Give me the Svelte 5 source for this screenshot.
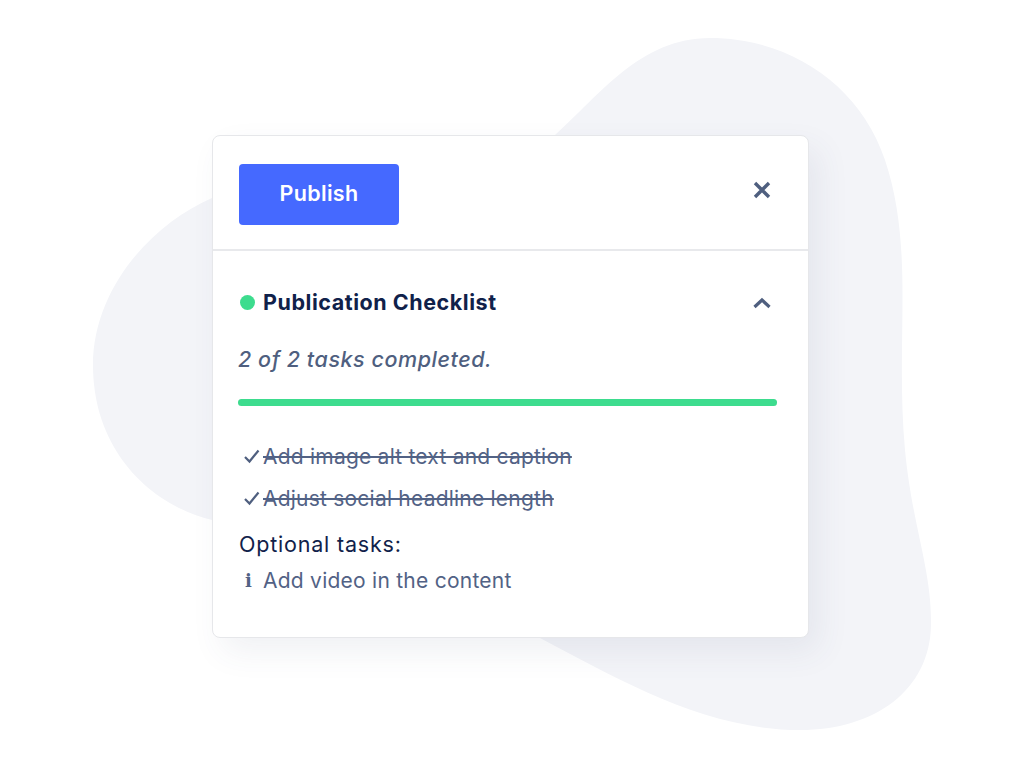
<script>
	let done = ["Add image alt text and caption", "Adjust social headline length"];
</script>

<div class="stage">
	<svg class="blob" width="1024" height="768" viewBox="0 0 1024 768">
		<path d="M555 135C600 95 640 38 710 38C790 38 860 85 885 160C915 250 895 340 905 450C912 525 932 570 931 625C930 690 875 730 800 730C705 730 620 680 540 638L212 520C150 505 93 450 93 365C93 290 150 225 212 198Z" fill="#f3f4f8" />
	</svg>

	<div class="card">
		<div class="top">
			<button class="publish">Publish</button>
			<svg class="icon close" width="20" height="20" viewBox="0 0 20 20">
				<path d="M3 3L17 17M17 3L3 17" stroke="#4f5f7f" stroke-width="3.4" fill="none" />
			</svg>
		</div>

		<div class="body">
			<div class="heading">
				<span class="dot"></span>
				<h2>Publication Checklist</h2>
				<svg class="icon chevron" width="20" height="12" viewBox="0 0 20 12">
					<path d="M2.5 10L10 3L17.5 10" stroke="#4f5f7f" stroke-width="3.2" fill="none" />
				</svg>
			</div>

			<p class="status">2 of 2 tasks completed.</p>
			<div class="track"><div class="fill" style="width: 100%"></div></div>

			<ul class="tasks">
				{#each done as task}
					<li>
						<svg width="18" height="18" viewBox="0 0 18 18">
							<path d="M2 10L6.5 14.5L15.5 3.5" stroke="#4f5f7f" stroke-width="2.2" fill="none" />
						</svg>
						<s>{task}</s>
					</li>
				{/each}
			</ul>

			<div class="optional">Optional tasks:</div>
			<div class="opt-task"><span class="info">i</span>Add video in the content</div>
		</div>
	</div>
</div>

<style>
	:global(body) {
		background: #fff;
	}
	.stage {
		position: relative;
		width: 1024px;
		height: 768px;
		padding: 135px 0 0 212px;
		box-sizing: border-box;
		overflow: hidden;
		font-family: "Inter", "Liberation Sans", sans-serif;
	}
	.blob {
		position: absolute;
		left: 0;
		top: 0;
	}
	.card {
		position: relative;
		width: 597px;
		height: 503px;
		box-sizing: border-box;
		background: #fff;
		border: 1px solid #e6e7ea;
		border-radius: 8px;
		box-shadow: 10px 14px 32px rgba(60, 75, 110, 0.08);
	}
	.top {
		display: flex;
		align-items: center;
		justify-content: space-between;
		height: 115px;
		box-sizing: border-box;
		padding: 4px 36px 0 26px;
		border-bottom: 2px solid #e8e9ec;
	}
	.publish {
		width: 160px;
		height: 61px;
		padding: 0 0 4px;
		background: #4569ff;
		color: #fff;
		border: none;
		border-radius: 4px;
		font: 600 21.5px "Inter", sans-serif;
		letter-spacing: 0.3px;
	}
	.close {
		margin-bottom: 10px;
	}
	.icon {
		display: block;
	}
	.chevron {
		margin-top: 2px;
	}
	.body {
		padding: 36px 31px 0 25px;
	}
	.heading {
		display: flex;
		align-items: center;
		height: 30px;
		padding-right: 5px;
	}
	.dot {
		width: 15px;
		height: 15px;
		margin: 0 8px 0 2px;
		border-radius: 50%;
		background: #3ddc8e;
	}
	h2 {
		flex: 1;
		margin: 0;
		color: #10214a;
		font-size: 21.5px;
		font-weight: 700;
		letter-spacing: 0.55px;
	}
	.status {
		margin: 27px 0 0;
		color: #4f5f7f;
		font-size: 21.5px;
		font-style: italic;
		font-weight: 500;
		line-height: 30px;
		letter-spacing: 0.55px;
	}
	.track {
		height: 7px;
		margin-top: 25px;
		border-radius: 4px;
		background: #e8e9ec;
	}
	.fill {
		height: 100%;
		border-radius: 4px;
		background: #3ddc8e;
	}
	.tasks {
		list-style: none;
		margin: 35px 0 0;
		padding: 0;
	}
	.tasks li {
		display: flex;
		align-items: center;
		gap: 2px;
		height: 30px;
		margin-bottom: 12px;
		padding-left: 5px;
		color: #526285;
		font-size: 21px;
		letter-spacing: 0.22px;
	}
	.optional {
		margin-top: 16px;
		padding-left: 1px;
		color: #10214a;
		font-size: 21.5px;
		line-height: 30px;
		letter-spacing: 0.8px;
	}
	.opt-task {
		display: flex;
		align-items: center;
		height: 30px;
		margin-top: 6px;
		padding-left: 7px;
		color: #526285;
		font-size: 21px;
		letter-spacing: 0.25px;
	}
	.info {
		width: 18px;
		font: 700 18px "DejaVu Serif", serif;
	}
</style>
